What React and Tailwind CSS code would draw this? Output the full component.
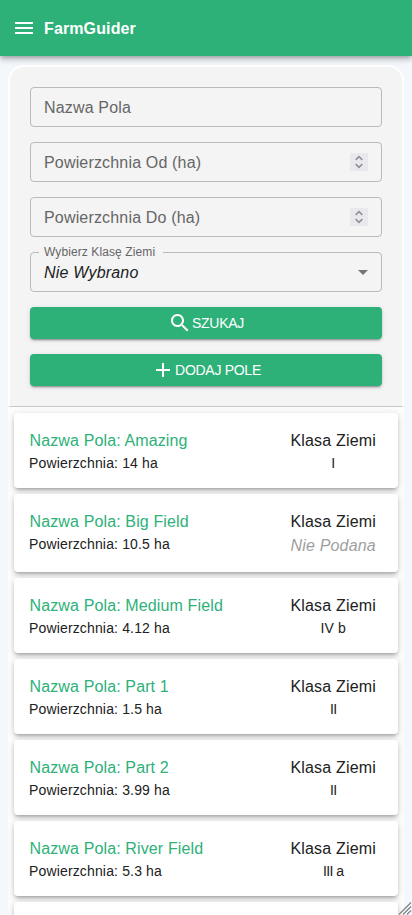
const fields = [
  { name: "Amazing", area: "14", soil: "I" },
  { name: "Big Field", area: "10.5", soil: null },
  { name: "Medium Field", area: "4.12", soil: "IV b" },
  { name: "Part 1", area: "1.5", soil: "II" },
  { name: "Part 2", area: "3.99", soil: "II" },
  { name: "River Field", area: "5.3", soil: "III a" },
];

const cardShadow =
  "shadow-[0px_3px_3px_-2px_rgba(0,0,0,0.2),0px_3px_4px_0px_rgba(0,0,0,0.14),0px_1px_8px_0px_rgba(0,0,0,0.12)]";

function Stepper() {
  return (
    <span className="flex h-[18px] w-[18px] items-center justify-center bg-[#e9e9ed]">
      <svg width="18" height="18" viewBox="0 0 18 18" fill="none" stroke="#8f8f9d" strokeWidth="1.6">
        <path d="M5.7 6.8 9 3.7l3.3 3.1M5.7 11.2 9 14.3l3.3-3.1" />
      </svg>
    </span>
  );
}

function Field({ label, number }) {
  return (
    <div className="flex h-10 items-center justify-between rounded border border-[#bababa] px-[13px] text-base tracking-[0.17px] text-[#666]">
      <span className="pt-0.5">{label}</span>
      {number && <Stepper />}
    </div>
  );
}

function Button({ icon, children }) {
  return (
    <button className="flex h-8 items-center justify-center rounded bg-[#2db178] text-sm tracking-[-0.28px] text-white shadow-[0px_3px_1px_-2px_rgba(0,0,0,0.2),0px_2px_2px_0px_rgba(0,0,0,0.14),0px_1px_5px_0px_rgba(0,0,0,0.12)]">
      <svg width="24" height="24" viewBox="0 0 24 24" fill="currentColor">
        <path d={icon} />
      </svg>
      <span>{children}</span>
    </button>
  );
}

function FieldCard({ name, area, soil }) {
  return (
    <article
      className={`${soil ? "h-[75px]" : "h-[78px]"} ${cardShadow} flex shrink-0 justify-between rounded bg-white pt-4 pr-[22px] pl-[15px]`}
    >
      <div>
        <h2 className="pl-[0.5px] text-base leading-6 tracking-[0.13px] text-[#2db178]">Nazwa Pola: {name}</h2>
        <p className="text-sm leading-5 tracking-[0.15px] text-[#212121]">Powierzchnia: {area} ha</p>
      </div>
      <div className="text-center text-[#212121]">
        <p className="text-base leading-6 tracking-[0.18px]">Klasa Ziemi</p>
        {soil ? (
          <p className={`text-sm leading-5 ${soil.startsWith("II") ? "tracking-[-0.6px]" : "tracking-[0.15px]"}`}>
            {soil}
          </p>
        ) : (
          <p className="text-base leading-6 tracking-[0.18px] text-[#9e9e9e] italic">Nie Podana</p>
        )}
      </div>
    </article>
  );
}

export default function App() {
  return (
    <div className="relative flex h-[915px] w-full flex-col overflow-hidden bg-[#f4f8fd] font-['Liberation_Sans',Arial,sans-serif]">
      <header className="z-10 flex h-14 shrink-0 items-center bg-[#2db178] pl-3 text-white shadow-[0px_2px_4px_-1px_rgba(0,0,0,0.2),0px_4px_5px_0px_rgba(0,0,0,0.14),0px_1px_10px_0px_rgba(0,0,0,0.12)]">
        <svg width="24" height="24" viewBox="0 0 24 24" fill="currentColor">
          <path d="M3 18h18v-2H3zm0-5h18v-2H3zm0-7v2h18V6z" />
        </svg>
        <span className="ml-2 pt-0.5 text-base font-bold tracking-[0.12px]">FarmGuider</span>
      </header>

      <main className="mx-2 mt-[9px] flex min-h-0 flex-1 flex-col">
        <section className="flex h-[342px] shrink-0 flex-col gap-[15px] rounded-t-[16px] border-2 border-b border-white border-b-[#c8c8c8] bg-[#f4f4f4] px-5 pt-5">
          <Field label="Nazwa Pola" />
          <Field label="Powierzchnia Od (ha)" number />
          <Field label="Powierzchnia Do (ha)" number />
          <div className="relative flex h-10 items-center justify-between rounded border border-[#bababa] pr-1.5 pl-[13px] text-base tracking-[0.15px] text-[#212121]">
            <span className="absolute -top-[9px] left-2 bg-[#f4f4f4] pr-2 pl-[5px] text-xs leading-4 tracking-[0.1px] text-[#666]">
              Wybierz Klasę Ziemi
            </span>
            <em className="pt-0.5 tracking-[0.18px]">Nie Wybrano</em>
            <svg width="24" height="24" viewBox="0 0 24 24" fill="#757575">
              <path d="m7 10 5 5 5-5z" />
            </svg>
          </div>
          <Button icon="M15.5 14h-.79l-.28-.27C15.41 12.59 16 11.11 16 9.5 16 5.91 13.09 3 9.5 3S3 5.91 3 9.5 5.91 16 9.5 16c1.61 0 3.09-.59 4.23-1.57l.27.28v.79l5 4.99L20.49 19zm-6 0C7.01 14 5 11.99 5 9.5S7.01 5 9.5 5 14 7.01 14 9.5 11.99 14 9.5 14">
            SZUKAJ
          </Button>
          <Button icon="M19 13h-6v6h-2v-6H5v-2h6V5h2v6h6z">DODAJ POLE</Button>
        </section>
        <section className="flex min-h-0 flex-1 flex-col gap-1.5 overflow-hidden bg-[#fdfdfd] px-1.5 pt-1.5">
          {fields.map((field) => (
            <FieldCard key={field.name} {...field} />
          ))}
          <article className={`h-[75px] shrink-0 rounded bg-white ${cardShadow}`} />
        </section>
      </main>

      <svg className="absolute right-0 bottom-0" width="14" height="14" viewBox="0 0 14 14" stroke="#808080" strokeWidth="1.1">
        <path d="M1 13.5 13 1.5M5 13.5l8-8M9 13.5l4-4" />
      </svg>
    </div>
  );
}
